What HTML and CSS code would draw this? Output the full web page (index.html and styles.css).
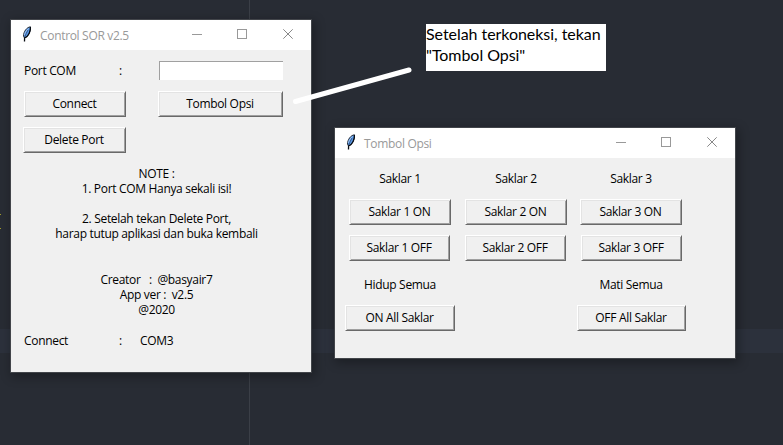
FILE: index.html
```html
<!DOCTYPE html>
<html lang="id">
<head>
<meta charset="utf-8">
<title>Control SOR v2.5</title>
<link rel="stylesheet" href="styles.css">
</head>
<body>
<svg class="sprites" aria-hidden="true">
  <symbol id="feather" viewBox="0 0 10 16">
    <path d="M8.500 .8C5 1 1.500 5.500 1.500 10L2.500 12C6.500 10.500 8.800 5.500 8.500 .8Z" fill="#5b9bea" stroke="#2b323c" stroke-width="1"/>
    <path d="M8.400 1C8.800 5 6.500 10.500 2.600 12L2.500 15.500" fill="none" stroke="#080c12" stroke-width="1.300"/>
    <path d="M6 4C4.800 6 3.600 8.500 2.800 11" fill="none" stroke="#263a5a" stroke-width=".7"/>
    <path d="M6.500 2.500C4.500 4 3 6.500 2.400 9" fill="none" stroke="#a9cdfa" stroke-width=".8"/>
  </symbol>
  <symbol id="controls" viewBox="0 0 138 30">
    <path d="M19 14.500h10M64.500 9.500h9v9h-9z" fill="none" stroke="#999" shape-rendering="crispEdges"/>
    <path d="M110.300 9.300l9.400 9.400M119.700 9.300l-9.400 9.400" fill="none" stroke="#888"/>
  </symbol>
</svg>
<main class="desktop">
  <div class="guide"></div>
  <div class="active-line"></div>
  <div class="code-edge"></div>

  <section class="window control">
    <header class="titlebar">
      <svg class="feather"><use href="#feather"/></svg>
      <h1 class="title">Control SOR v2.5</h1>
      <svg class="controls"><use href="#controls"/></svg>
    </header>
    <div class="form">
      <span class="port">Port COM</span><span>:</span><input class="entry" aria-label="Port COM">
      <button class="btn connect">Connect</button><button class="btn options">Tombol Opsi</button>
      <button class="btn delete">Delete Port</button>
    </div>
    <div class="notes">
      <p>NOTE :<br>1. Port COM Hanya sekali isi!<br><br>2. Setelah tekan Delete Port,<br>harap tutup aplikasi dan buka kembali</p>
      <p class="credit">Creator &nbsp; : &nbsp;@basyair7<br>App ver : &nbsp;v2.5<br>@2020</p>
    </div>
    <div class="status"><span>Connect</span><span>:</span><span>COM3</span></div>
  </section>

  <section class="window switches">
    <header class="titlebar">
      <svg class="feather"><use href="#feather"/></svg>
      <h1 class="title">Tombol Opsi</h1>
      <svg class="controls"><use href="#controls"/></svg>
    </header>
    <div class="panel">
      <div class="column">
        <span class="label">Saklar 1</span>
        <button class="btn on">Saklar 1 ON</button>
        <button class="btn off">Saklar 1 OFF</button>
        <span class="label all">Hidup Semua</span>
        <button class="btn wide">ON All Saklar</button>
      </div>
      <div class="column">
        <span class="label">Saklar 2</span>
        <button class="btn on">Saklar 2 ON</button>
        <button class="btn off">Saklar 2 OFF</button>
      </div>
      <div class="column">
        <span class="label">Saklar 3</span>
        <button class="btn on">Saklar 3 ON</button>
        <button class="btn off right">Saklar 3 OFF</button>
        <span class="label all">Mati Semua</span>
        <button class="btn wide last">OFF All Saklar</button>
      </div>
    </div>
  </section>

  <svg class="pointer" viewBox="0 0 130 50"><path d="M5.500 41.500L119 10" stroke="#fff" stroke-width="5" stroke-linecap="round"/></svg>
  <div class="callout"><p class="callout-text">Setelah terkoneksi, tekan<br>"Tombol Opsi"</p></div>
</main>
</body>
</html>
```
FILE: styles.css
```css
* { box-sizing: border-box; }
body {
  margin: 0;
  color: #000;
  font: 12px/15px "Open Sans", "Noto Sans", sans-serif;
  letter-spacing: -0.32px;
}
p, h1 { margin: 0; font-weight: 400; }
.sprites { position: absolute; width: 0; height: 0; }
.desktop {
  position: relative;
  width: 783px;
  height: 445px;
  overflow: hidden;
  background: #282c34;
}
.guide { position: absolute; left: 249px; top: 0; width: 1px; height: 445px; background: #3b3f47; }
.active-line { position: absolute; left: 0; top: 329px; width: 783px; height: 24px; background: #2c313c; }
.code-edge {
  position: absolute; left: 0; top: 214px; width: 1px; height: 15px;
  border: solid #a09a2c; border-width: 1px 0;
}
.window {
  position: absolute;
  background: #f0f0f0;
  outline: 1px solid #42454a;
  box-shadow: 2px 3px 10px 2px rgba(0, 0, 0, .3);
}
.control { left: 11px; top: 20px; width: 300px; height: 352px; }
.switches { left: 335px; top: 128px; width: 400px; height: 230px; }
.titlebar {
  display: flex;
  align-items: center;
  height: 30px;
  padding-left: 11px;
  background: #fff;
}
.feather { width: 10px; height: 16px; margin: 0 8px 2px 0; }
.title { color: #999; font-size: 12px; }
.controls { width: 138px; height: 30px; margin-left: auto; }
.form {
  display: grid;
  grid-template-columns: 95px 39px 125px;
  grid-template-rows: 21px 27px 27px;
  row-gap: 9px;
  padding: 11px 0 0 13px;
}
.form > span { line-height: 20px; }
.entry {
  width: 124px;
  height: 19px;
  margin-left: 1px;
  padding: 0;
  border: solid #a0a0a0;
  border-width: 1px 0 0 1px;
  background: #fff;
}
.btn {
  height: 26px;
  padding: 0 1px 1px 0;
  border: 1px solid;
  border-color: #fff #696969 #696969 #fff;
  background: #f0f0f0;
  box-shadow: inset 1px 1px #e3e3e3, inset -1px -1px #a0a0a0;
  color: inherit;
  font: inherit;
  letter-spacing: inherit;
  white-space: nowrap;
}
.connect { grid-column: 1 / 3; width: 102px; }
.options { width: 125px; }
.delete { grid-column: 1 / 3; width: 103px; margin-left: -1px; }
.notes { margin: 12px 9px 0 0; text-align: center; }
.credit { margin-top: 31px; }
.status {
  display: grid;
  grid-template-columns: 95px 21px auto;
  margin-top: 16px;
  padding-left: 13px;
}
.panel {
  display: grid;
  grid-template-columns: 110px 122px 108px;
  padding: 13px 0 0 10px;
}
.column { display: flex; flex-direction: column; align-items: center; }
.label { margin-bottom: 13px; }
.btn.on { width: 102px; }
.btn.off { width: 101px; margin: 10px 1px 0 0; }
.btn.off.right { margin-right: -1px; }
.label.all { margin: 16px 0 13px; }
.btn.wide { width: 110px; }
.btn.wide.last { width: 109px; margin-left: 1px; }
.pointer { position: absolute; left: 290px; top: 60px; width: 130px; height: 50px; }
.callout {
  position: absolute;
  left: 426px;
  top: 24px;
  display: flex;
  align-items: flex-start;
  width: 180px;
  height: 47px;
  background: #fff;
}
.callout-text {
  margin-top: -1px;
  font: 16px/21px Lato, sans-serif;
  letter-spacing: -0.05px;
  white-space: nowrap;
}
```
